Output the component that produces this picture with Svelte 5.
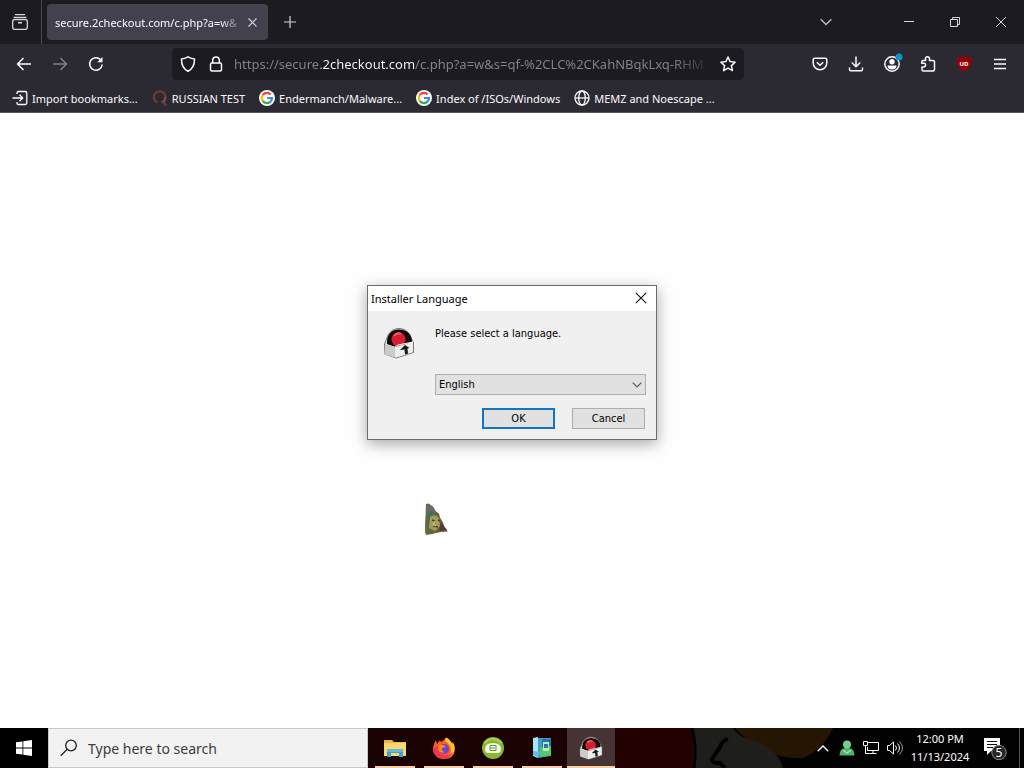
<script lang="ts">
  let url = $state('https://secure.2checkout.com/c.php?a=w&s=qf-%2CLC%2CKahNBqkLxq-RHM');
  let language = $state('English');

  const bookmarks = [
    { icon: 'import', label: 'Import bookmarks...' },
    { icon: 'search', label: 'RUSSIAN TEST' },
    { icon: 'google', label: 'Endermanch/Malware...' },
    { icon: 'google', label: 'Index of /ISOs/Windows' },
    { icon: 'globe', label: 'MEMZ and Noescape ...' },
  ];

  const tasks = [
    { icon: 'explorer', label: 'File Explorer' },
    { icon: 'firefox', label: 'Firefox' },
    { icon: 'camtasia', label: 'Recorder' },
    { icon: 'registry', label: 'Registry tool' },
    { icon: 'installer', label: 'Installer Language', active: true },
  ];
</script>

{#snippet installerIcon()}
  <svg class="installer-icon" viewBox="0 0 32 32" aria-hidden="true">
    <path d="M1.5 17 5 8Q9 1.500 16 1.500T27 8l3.500 8v9.500L13 31 2 27z" fill="#d8dbd9" stroke="#777" stroke-width="1"/>
    <path d="M4 17Q3.500 3 16 2.500 28.500 3 29 15L15 21z" fill="#160507"/>
    <circle cx="15.500" cy="12.500" r="7" fill="#d51f31"/>
    <path d="M11 9q3-4 7-2" fill="none" stroke="#f2606a" stroke-width="2"/>
    <path d="m2 17 10 3 18-5v10l-17 5.500L2 27z" fill="#eceeec"/>
    <path d="m2 17 10 3v10.500L2 27z" fill="#c8cdca"/>
    <path d="m12 20 3-2 15-3" fill="none" stroke="#fff"/>
    <path d="m17 23 5-5 4.500 3-2 .5.500 5-3 1-.5-5z" fill="#171b18"/>
  </svg>
{/snippet}

<div class="desktop">
  <header class="browser">
    <div class="tabbar">
      <button class="firefox-view" aria-label="Firefox View">
        <svg width="18" height="18" viewBox="0 0 18 18" fill="none" stroke="#d5d5da" stroke-width="1.300">
          <path d="M4 1.700h10M2.500 4.300h13"/>
          <rect x="1.700" y="6.500" width="14.600" height="9.800" rx="2"/>
          <path d="M7 9.700h4" stroke-width="1.600"/>
        </svg>
      </button>
      <div class="tab">
        <span class="tab-title">secure.2checkout.com/c.php?a=w&amp;</span>
        <button class="tab-close" aria-label="Close tab">
          <svg width="9" height="9" viewBox="0 0 9 9" stroke="#d5d5da" stroke-width="1.100"><path d="m.5.5 8 8m0-8-8 8"/></svg>
        </button>
      </div>
      <button class="new-tab" aria-label="New tab">
        <svg width="12" height="12" viewBox="0 0 12 12" stroke="#d5d5da" stroke-width="1.200"><path d="M6 0v12M0 6h12"/></svg>
      </button>
      <div class="window-controls">
        <button class="list-tabs" aria-label="List all tabs">
          <svg width="12" height="8" viewBox="0 0 12 8" fill="none" stroke="#bdbdc2" stroke-width="1.400"><path d="m.7 1.200 5.300 5.300 5.300-5.300"/></svg>
        </button>
        <button aria-label="Minimize">
          <svg width="10" height="10" viewBox="0 0 10 10" stroke="#d5d5da"><path d="M0 4.500h10"/></svg>
        </button>
        <button aria-label="Restore">
          <svg width="10" height="10" viewBox="0 0 10 10" fill="none" stroke="#d5d5da"><path d="M.5 2.500h7v7h-7zM2.500 2.500v-2h7v7h-2"/></svg>
        </button>
        <button aria-label="Close">
          <svg width="10" height="10" viewBox="0 0 10 10" stroke="#d5d5da"><path d="m0 0 10 10M10 0 0 10"/></svg>
        </button>
      </div>
    </div>

    <div class="navbar">
      <button aria-label="Back">
        <svg width="16" height="16" viewBox="0 0 16 16"><path d="M15 8H1.500M7.500 2l-6 6 6 6"/></svg>
      </button>
      <button class="disabled" aria-label="Forward">
        <svg width="16" height="16" viewBox="0 0 16 16"><path d="M1 8h13.500M8.500 2l6 6-6 6"/></svg>
      </button>
      <button aria-label="Reload">
        <svg width="16" height="16" viewBox="0 0 16 16"><path d="M14.200 8.500A6.300 6.300 0 1 1 12.500 3.600"/><path d="M14.500 1v5.200H9.300z" fill="#fbfbfe" stroke="none"/></svg>
      </button>
      <div class="urlbar">
        <svg width="16" height="16" viewBox="0 0 16 16"><path d="M8 .8q3.500 2 6.500 2.200.2 9-6.500 12.200Q1.300 12 1.500 3 4.500 2.800 8 .8z"/></svg>
        <svg width="16" height="16" viewBox="0 0 16 16"><rect x="2.500" y="7" width="11" height="8" rx="1.500"/><path d="M4.700 7V4.200a3.300 3.300 0 0 1 6.600 0V7"/></svg>
        <input type="text" aria-label="Address" bind:value={url} />
        <button class="star" aria-label="Bookmark this page">
          <svg width="16" height="16" viewBox="0 0 16 16"><path d="m8 1 2.100 4.600 5 .6-3.700 3.400 1 5L8 12.100l-4.400 2.500 1-5L.9 6.200l5-.6z"/></svg>
        </button>
      </div>
      <button aria-label="Save to Pocket">
        <svg width="16" height="16" viewBox="0 0 16 16"><path d="M2.800 2.200h10.400q1.600 0 1.600 1.600V7A6.800 6.800 0 0 1 1.200 7V3.800q0-1.600 1.600-1.600z"/><path d="m4.800 6.200 3.200 3 3.200-3"/></svg>
      </button>
      <button aria-label="Downloads">
        <svg width="16" height="16" viewBox="0 0 16 16"><path d="M8 .5v10M3.800 6.500 8 10.700l4.200-4.200M1.500 11.500v2q0 1.300 1.300 1.300h10.400q1.300 0 1.300-1.300v-2"/></svg>
      </button>
      <button aria-label="Account">
        <svg width="22" height="22" viewBox="0 0 22 22"><circle cx="11" cy="11" r="7.200"/><circle cx="11" cy="8.800" r="2.700" fill="#fbfbfe" stroke="none"/><path d="M6.500 12.500h9q0 4-4.500 4t-4.500-4z" fill="#fbfbfe" stroke="none"/><circle cx="18" cy="4" r="3.500" fill="#0a96c8" stroke="none"/></svg>
      </button>
      <button aria-label="Extensions">
        <svg width="16" height="16" viewBox="0 0 16 16"><path d="M5.500 4.500V3q0-2.200 2-2.200t2 2.200v1.500H13q1.500 0 1.500 1.500v7.500q0 1.500-1.500 1.500H3.500Q2 15 2 13.500V11h1.500Q5.500 11 5.500 9T3.500 7.200H1.700V6q0-1.500 1.500-1.500z"/></svg>
      </button>
      <button aria-label="uBlock Origin">
        <svg width="16" height="16" viewBox="0 0 16 16"><path d="M8 0q3.500 1.800 7.500 1.800.8 10-7.500 14.200Q-.3 11.800.5 1.800 4.500 1.800 8 0z" fill="#96000a" stroke="none"/><text x="8" y="10" text-anchor="middle">UD</text></svg>
      </button>
      <button aria-label="Menu">
        <svg width="16" height="16" viewBox="0 0 16 16"><path d="M2 3.500h12M2 8h12M2 12.500h12"/></svg>
      </button>
    </div>

    <nav class="bookmarks">
      {#each bookmarks as bookmark}
        <a href="#bookmark">
          <svg width="16" height="16" viewBox="0 0 16 16" fill="none" stroke="#fbfbfe" stroke-width="1.300">
            {#if bookmark.icon === 'import'}
              <path d="M5 4V3q0-1.500 1.500-1.500h6.800q1.500 0 1.500 1.500v10q0 1.500-1.500 1.500H6.500Q5 14.500 5 13v-1M.5 8h10M7.500 4.800 10.700 8l-3.200 3.200"/>
            {:else if bookmark.icon === 'search'}
              <path d="M5.500 12.500A5.800 5.800 0 1 1 10.800 12l3.500 3.500" stroke="#713b35" stroke-width="2.200"/>
              <path d="M10.500 12q3-1.500 3-5" stroke="#95544a"/>
            {:else if bookmark.icon === 'google'}
              <circle cx="8" cy="8" r="8" fill="#fff" stroke="none"/>
              <g stroke-width="2.200">
                <path d="M3.800 5.200A5 5 0 0 1 11.600 4.500" stroke="#ea4335"/>
                <path d="M3.800 10.800a5 5 0 0 1 0-5.600" stroke="#fbbc05"/>
                <path d="M11.500 11.600a5 5 0 0 1-7.700-.8" stroke="#34a853"/>
                <path d="M8 8h5a5 5 0 0 1-1.500 3.600" stroke="#4285f4"/>
              </g>
            {:else}
              <circle cx="8" cy="8" r="7"/>
              <ellipse cx="8" cy="8" rx="3.300" ry="7"/>
              <path d="M1 8h14"/>
            {/if}
          </svg>
          <span>{bookmark.label}</span>
        </a>
      {/each}
    </nav>
  </header>

  <main class="page"></main>

  <section class="dialog" role="dialog" aria-labelledby="dialog-title">
    <div class="dialog-titlebar">
      <span id="dialog-title">Installer Language</span>
      <button aria-label="Close">
        <svg width="12" height="12" viewBox="0 0 12 12" stroke="#111" stroke-width="1.100"><path d="m.8.8 10.400 10.400M11.200.8.8 11.200"/></svg>
      </button>
    </div>
    <div class="dialog-body">
      {@render installerIcon()}
      <div class="dialog-form">
        <label for="language">Please select a language.</label>
        <div class="dropdown">
          <select id="language" bind:value={language}>
            <option>English</option>
          </select>
          <svg width="10" height="6" viewBox="0 0 10 6" fill="none" stroke="#555" stroke-width="1.100"><path d="m.7.700 4.300 4.300L9.300.7"/></svg>
        </div>
        <div class="dialog-actions">
          <button class="default">OK</button>
          <button>Cancel</button>
        </div>
      </div>
    </div>
  </section>

  <svg class="cursor" width="24" height="32" viewBox="0 0 24 32" aria-hidden="true">
    <path d="M1 1 4 .500l2 2 2 1 3 5 3 2 1 4 3 5 1 4 4 5-7 .5-5 1-4 1-6 1L0 24 .500 14z" fill="#66633f"/>
    <path d="m2 1 4 1.500 5 7-4 3-3-2-3 4z" fill="#76666a"/>
    <path d="m4 7 5 2-3 5-4 1z" fill="#3c7457"/>
    <path d="M5 14q5-4 9 1l1 8-5 5-6-3z" fill="#a09c62"/>
    <path d="m7 17 3 1m3-1 2 1m-7 5 5 1" stroke="#514229" stroke-width="1.500"/>
    <path d="m16 19 6 8-8 1z" fill="#5b3832"/>
    <path d="m1 17 3 8-2 5H0z" fill="#5b723d"/>
    <path d="m10 18-2 4 3 1" fill="none" stroke="#d0c67c"/>
  </svg>

  <footer class="taskbar">
    <svg class="wallpaper" viewBox="0 0 656 40" preserveAspectRatio="none" aria-hidden="true">
      <path d="M0 0h656v40H0z" fill="#020202"/>
      <path d="M0 0h248v40H0z" fill="#1b0303"/>
      <path d="M247 0h77q4 18 2 40h-79z" fill="#220101"/>
      <path d="M367 0h98q-10 22-30 30-40 2-68-30z" fill="#241603"/>
      <path d="M325 0h40q6 10 25 14 20 8 25 26h-90z" fill="#1e1f1a"/>
      <path d="M360 11q-6 2-8 8l-8 12q-1 4 8 4l5 5" fill="none" stroke="#020202" stroke-width="4"/>
      <path d="M324 0q5 18 2 40" fill="none" stroke="#020202" stroke-width="3"/>
    </svg>
    <button class="start" aria-label="Start">
      <svg width="16" height="16" viewBox="0 0 16 16" fill="#fff"><path d="m0 2.300 6.500-.9v6.200H0zM7.300 1.300 16 0v7.600H7.300zM0 8.400h6.500v6.200l-6.500-.9zM7.300 8.400H16V16l-8.700-1.300z"/></svg>
    </button>
    <label class="search">
      <svg width="18" height="18" viewBox="0 0 18 18" fill="none" stroke="#222" stroke-width="1.300"><circle cx="11" cy="6.500" r="5.300"/><path d="M7.200 10.300.8 16.700"/></svg>
      <input type="text" placeholder="Type here to search" aria-label="Search" />
    </label>
    <div class="tasks">
      {#each tasks as task}
        <button class:active={task.active} aria-label={task.label}>
          {#if task.icon === 'explorer'}
            <svg width="24" height="24" viewBox="0 0 24 24">
              <path d="M1 4h8l2 2h12v14H1z" fill="#e9b844"/><path d="M1 7h22v13H1z" fill="#fbd86e"/><path d="M4 13h16v8h-4v-4H8v4H4z" fill="#3f9fd3"/><path d="M4 13h16v3H4z" fill="#65bbdf"/>
            </svg>
          {:else if task.icon === 'firefox'}
            <svg width="24" height="24" viewBox="0 0 24 24">
              <path d="M12 23C5 23 .7 18 1 12.500Q1.300 8 4 4l1 4 3-4 1 2q3-1 5-4.500Q18 3 19 7l2-1q2.500 4 2 8-1 9-11 9z" fill="#ff5a24"/>
              <path d="M14 1.500Q19 4 20 8l1.500-.5Q25 19 14 21q7-4 4-11-3-4-5-5z" fill="#ffc92e"/>
              <path d="M1 13q1 8 9 9 8 1 11-6-5 5-10 3-6-2-5-9z" fill="#f52f55"/>
              <circle cx="12" cy="13" r="5" fill="#7040cf"/><path d="M7 9q5-1 7 2l-4 1q-1 3 3 4-6 2-7-4z" fill="#ff8a20"/>
            </svg>
          {:else if task.icon === 'camtasia'}
            <svg width="24" height="24" viewBox="0 0 24 24">
              <circle cx="12" cy="12" r="11" fill="#86b82d"/><path d="M3 7q9-8 18 0" fill="none" stroke="#a9cf55" stroke-width="2"/><path d="M4 13q0-6 8-6t8 6q0 4-3 4H7q-3 0-3-4z" fill="#f5faeb"/><path d="M9 9.500h6v5H9zM9 12h5" fill="none" stroke="#69913d"/>
            </svg>
          {:else if task.icon === 'registry'}
            <svg width="24" height="24" viewBox="0 0 24 24">
              <path d="m3 2 5-1v21l-5-2z" fill="#a9e4f5"/><path d="M8 2h13v18L8 22z" fill="#3e9fc8"/><path d="M12 3h9v8h-9z" fill="#2476a8"/><path d="m10 12 11-2v9l-11 2z" fill="#54c769"/><path d="M13 6h6v9h-6z" fill="#b5edb0"/><path d="M14 8h4v4h-4z" fill="#386bae"/><path d="m3 15 7 1-2 5-5-2z" fill="#65b9e5"/>
            </svg>
          {:else}
            {@render installerIcon()}
          {/if}
        </button>
      {/each}
    </div>
    <div class="tray">
      <button aria-label="Show hidden icons">
        <svg width="12" height="7" viewBox="0 0 12 7" fill="none" stroke="#fff" stroke-width="1.300"><path d="m.7 6.300 5.300-5.300 5.300 5.300"/></svg>
      </button>
      <button aria-label="User status">
        <svg width="16" height="16" viewBox="0 0 16 16"><path d="M.5 15.500Q.5 8.500 6 8h4q5.500.5 5.500 7.500z" fill="#4fb36c"/><circle cx="8" cy="4.500" r="4" fill="#74cf8b"/><path d="m4 10 4 3 4-3" fill="none" stroke="#a4e0b1" stroke-width="1.500"/></svg>
      </button>
      <button aria-label="Network">
        <svg width="16" height="16" viewBox="0 0 16 16" fill="none" stroke="#fff"><path d="M5 2.500h10.500v8H4.500V7M10 10.500v3M6.500 13.500h7M.5 1.500h4v4h-4zM2.500 5.500v8h4"/></svg>
      </button>
      <button aria-label="Volume">
        <svg width="16" height="16" viewBox="0 0 16 16" fill="none" stroke="#fff"><path d="M.5 5.500h2l4-3.500v12l-4-3.500h-2zM8.500 5.500q2 2.500 0 5M10.500 3.500q4 4.500 0 9"/><path d="M12.500 1.500q6 6.500 0 13" stroke="#999"/></svg>
      </button>
      <div class="clock"><time>12:00 PM</time><time>11/13/2024</time></div>
      <button class="notifications" aria-label="Notifications">
        <svg width="24" height="24" viewBox="0 0 24 24"><path d="M1 2h16v13H8l-4 4v-4H1z" fill="#fff"/><path d="M4 5.500h10M4 8.500h10M4 11.500h6" stroke="#111"/><circle cx="16" cy="16.500" r="7.200" fill="#26272a" stroke="#8b8b8b"/><text x="16" y="21" text-anchor="middle">5</text></svg>
      </button>
      <span class="show-desktop"></span>
    </div>
  </footer>
</div>

<style>
  :global(body) {
    margin: 0;
  }

  .desktop {
    position: relative;
    display: flex;
    flex-direction: column;
    min-height: 100vh;
    background: #fefefe;
    font-family: "Noto Sans", "Open Sans", sans-serif;
    font-size: 11px;
  }

  button,
  input,
  select {
    margin: 0;
    padding: 0;
    border: none;
    background: none;
    color: inherit;
    font: inherit;
    outline: none;
  }

  button {
    display: flex;
    align-items: center;
    justify-content: center;
  }

  svg {
    flex-shrink: 0;
  }

  .browser {
    background: #2b2a33;
    color: #fbfbfe;
    border-bottom: 1px solid #55545c;
  }

  .tabbar {
    display: flex;
    align-items: center;
    height: 44px;
    background: #1c1b22;
  }

  .firefox-view {
    width: 42px;
    height: 44px;
    padding-right: 2px;
    border-right: 1px solid #48474f;
    box-sizing: border-box;
  }

  .tab {
    display: flex;
    align-items: center;
    width: 221px;
    height: 36px;
    margin-left: 5px;
    padding: 0 8px;
    box-sizing: border-box;
    border-radius: 4px;
    background: #42414d;
  }

  .tab-title {
    flex: 1;
    overflow: hidden;
    white-space: nowrap;
    mask-image: linear-gradient(to left, transparent, #000 24px);
  }

  .tab-close {
    width: 16px;
    height: 24px;
  }

  .new-tab {
    width: 44px;
    height: 36px;
  }

  .window-controls {
    display: flex;
    margin-left: auto;
  }

  .window-controls button {
    width: 46px;
    height: 44px;
  }

  .window-controls .list-tabs {
    margin-right: 37px;
  }

  .navbar {
    display: flex;
    align-items: center;
    height: 40px;
    padding: 0 6px;
  }

  .navbar button {
    width: 36px;
    height: 32px;
  }

  .navbar svg {
    fill: none;
    stroke: #fbfbfe;
    stroke-width: 1.5;
    stroke-linejoin: round;
  }

  .navbar .disabled {
    opacity: 0.4;
  }

  .navbar text {
    fill: #fff;
    stroke: none;
    font-size: 6px;
    font-weight: 700;
  }

  .urlbar {
    display: flex;
    align-items: center;
    flex: 1;
    min-width: 0;
    gap: 12px;
    height: 32px;
    margin: 0 58px;
    padding-left: 8px;
    border-radius: 4px;
    background: #1c1b22;
  }

  .urlbar input {
    flex: 1;
    min-width: 0;
    margin-left: -2px;
    font-size: 13px;
    color: transparent;
    background: linear-gradient(to right, #85848c 87px, #fbfbfe 87px 180px, #85848c 180px);
    background-clip: text;
    mask-image: linear-gradient(to left, transparent, #000 40px);
  }

  .urlbar .star {
    width: 16px;
    margin: 0 8px 0 -4px;
  }

  .bookmarks {
    display: flex;
    gap: 14px;
    height: 28px;
    padding: 0 12px;
  }

  .bookmarks a {
    display: flex;
    align-items: center;
    gap: 4px;
    color: inherit;
    text-decoration: none;
    white-space: nowrap;
  }

  .page {
    flex: 1;
  }

  .dialog {
    position: absolute;
    top: 285px;
    left: 367px;
    width: 290px;
    box-sizing: border-box;
    border: 1px solid #6b6b6b;
    background: #f0f0f0;
    color: #000;
    box-shadow: 0 4px 14px rgba(0, 0, 0, 0.35);
  }

  .dialog-titlebar {
    display: flex;
    align-items: center;
    justify-content: space-between;
    height: 24px;
    padding-left: 3px;
    border-bottom: 1px solid #fff;
    background: #fff;
  }

  .dialog-titlebar button {
    width: 30px;
    height: 24px;
  }

  .dialog-body {
    display: flex;
    gap: 20px;
    padding: 16px 10px 10px 15px;
    font-family: "DejaVu Sans Condensed", "DejaVu Sans", sans-serif;
  }

  .installer-icon {
    width: 32px;
    height: 32px;
  }

  .dialog-form {
    flex: 1;
  }

  .dialog-form label {
    display: block;
    height: 47px;
    line-height: 14px;
  }

  .dropdown {
    display: grid;
    align-items: center;
  }

  .dropdown select,
  .dropdown svg {
    grid-area: 1 / 1;
  }

  .dropdown select {
    appearance: none;
    height: 21px;
    padding-left: 3px;
    border: 1px solid #adadad;
    background: #e1e1e1;
  }

  .dropdown svg {
    justify-self: end;
    margin-right: 4px;
    pointer-events: none;
  }

  .dialog-actions {
    display: flex;
    justify-content: flex-end;
    gap: 17px;
    margin-top: 13px;
    padding-right: 1px;
  }

  .dialog-actions button {
    width: 73px;
    height: 21px;
    box-sizing: border-box;
    border: 1px solid #adadad;
    background: #e1e1e1;
  }

  .dialog-actions .default {
    border: 2px solid #0f75c4;
  }

  .cursor {
    position: absolute;
    top: 503px;
    left: 425px;
    pointer-events: none;
  }

  .taskbar {
    position: relative;
    display: flex;
    height: 40px;
    background: #000;
    color: #fff;
  }

  .wallpaper {
    position: absolute;
    left: 368px;
    width: calc(100% - 368px);
    height: 40px;
  }

  .start {
    width: 48px;
  }

  .search {
    display: flex;
    align-items: center;
    gap: 10px;
    width: 320px;
    padding: 0 11px;
    box-sizing: border-box;
    border: 1px solid #c8c8c8;
    background: #f2f2f2;
  }

  .search input {
    flex: 1;
    min-width: 0;
    font-size: 14px;
    color: #333;
  }

  .search input::placeholder {
    color: #3c3c3c;
  }

  .tasks {
    position: relative;
    display: flex;
    gap: 1px;
    padding-left: 3px;
  }

  .tasks button {
    width: 48px;
    background: linear-gradient(#f6cfa8, #f6cfa8) bottom / 40px 2px no-repeat;
  }

  .tasks .active {
    background: linear-gradient(#f6cfa8, #f6cfa8) bottom / 48px 2px no-repeat #463334;
  }

  .tasks .installer-icon {
    width: 24px;
    height: 24px;
  }

  .tray {
    position: relative;
    display: flex;
    align-items: center;
    margin-left: auto;
  }

  .tray button {
    width: 24px;
    height: 40px;
  }

  .clock {
    display: flex;
    flex-direction: column;
    align-items: center;
    width: 66px;
    line-height: 18px;
  }

  .tray .notifications {
    width: 46px;
    padding-right: 2px;
  }

  .notifications text {
    fill: #fff;
    font-size: 12px;
  }

  .show-desktop {
    width: 4px;
    height: 40px;
    border-left: 1px solid #555;
  }
</style>
